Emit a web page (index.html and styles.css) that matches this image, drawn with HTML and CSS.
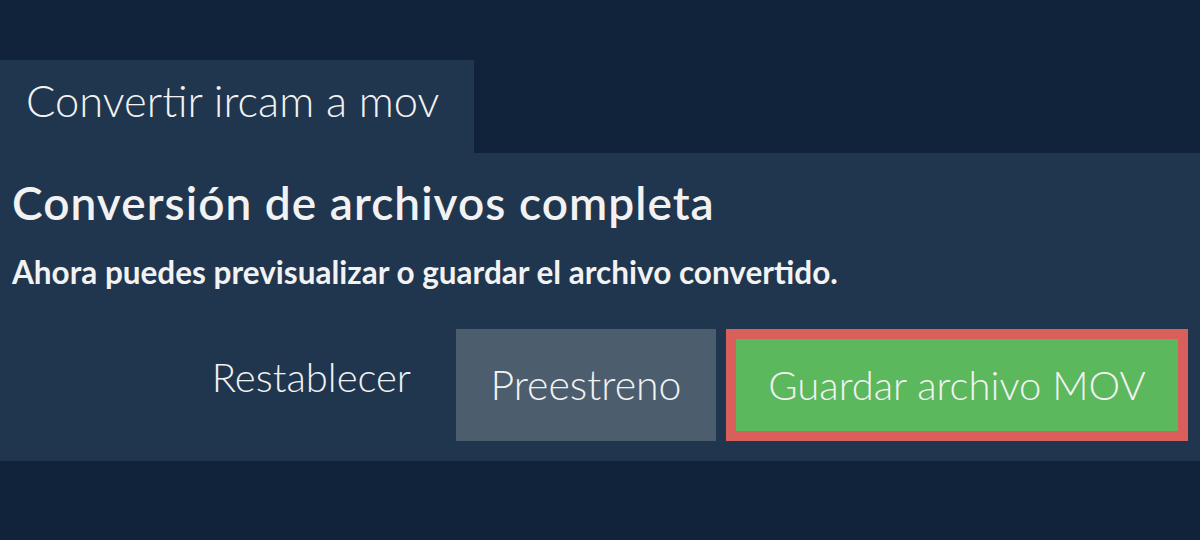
FILE: index.html
```html
<!DOCTYPE html>
<html lang="es">
<head>
<meta charset="utf-8">
<title>Convertir ircam a mov</title>
<link rel="stylesheet" href="styles.css">
</head>
<body>
<div class="page">
  <div class="tabs">
    <div class="tab">Convertir ircam a mov</div>
  </div>
  <section class="panel">
    <h1 class="title">Conversión de archivos completa</h1>
    <p class="subtitle">Ahora puedes previsualizar o guardar el archivo convertido.</p>
    <div class="actions">
      <button class="btn btn-link">Restablecer</button>
      <button class="btn btn-preview">Preestreno</button>
      <div class="save-wrap">
        <button class="btn btn-save">Guardar archivo MOV</button>
      </div>
    </div>
  </section>
</div>
</body>
</html>
```

FILE: styles.css
```css
* { box-sizing: border-box; }
html, body {
  margin: 0;
  padding: 0;
  background: #10233a;
  width: 1200px;
  height: 540px;
  overflow: hidden;
}
body {
  font-family: Lato, "Open Sans", sans-serif;
  color: #f2f2f2;
}
.page {
  padding-top: 60px;
}
.tabs {
  display: flex;
}
.tab {
  background: #20364e;
  width: 474px;
  height: 93px;
  padding: 14px 0 0 26px;
  font-size: 43.5px;
  font-weight: 300;
  line-height: 1.2;
  white-space: nowrap;
}
.panel {
  background: #20364e;
  padding: 22px 12px 20px 12px;
}
.title {
  margin: 0;
  font-size: 46px;
  font-weight: 600;
  letter-spacing: 1.05px;
  line-height: 1.2;
}
.subtitle {
  margin: 24px 0 0 0;
  font-size: 31.5px;
  font-weight: 700;
  line-height: 1.2;
}
.actions {
  margin-top: 37px;
  display: flex;
  justify-content: flex-end;
  align-items: center;
  gap: 10px;
}
.btn {
  font-family: inherit;
  font-size: 40px;
  font-weight: 300;
  color: #f2f2f2;
  border: 0;
  padding: 0 35px;
  height: 112px;
  cursor: pointer;
  line-height: 1;
  white-space: nowrap;
}
.btn-link {
  background: transparent;
  padding-bottom: 16px;
}
.btn-preview {
  background: #4c5d6e;
  width: 260px;
  padding: 0;
  font-size: 41px;
}
.save-wrap {
  border: 10px solid #d9605a;
  height: 112px;
}
.btn-save {
  background: #5cb85c;
  height: 92px;
  width: 442px;
  padding: 0;
}
```
